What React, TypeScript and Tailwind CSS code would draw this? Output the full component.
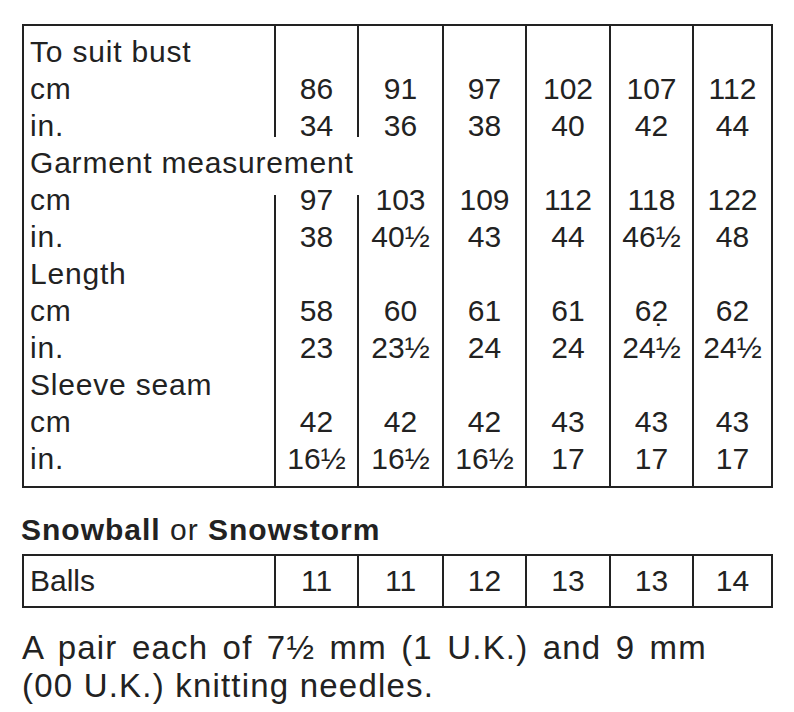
import React from "react"

type Row = {
  label: string
  vals?: string[]
}

const rows: Row[] = [
  { label: "To suit bust" },
  { label: "cm", vals: ["86", "91", "97", "102", "107", "112"] },
  { label: "in.", vals: ["34", "36", "38", "40", "42", "44"] },
  { label: "Garment measurement" },
  { label: "cm", vals: ["97", "103", "109", "112", "118", "122"] },
  { label: "in.", vals: ["38", "40½", "43", "44", "46½", "48"] },
  { label: "Length" },
  { label: "cm", vals: ["58", "60", "61", "61", "62\u0323", "62"] },
  { label: "in.", vals: ["23", "23½", "24", "24", "24½", "24½"] },
  { label: "Sleeve seam" },
  { label: "cm", vals: ["42", "42", "42", "43", "43", "43"] },
  { label: "in.", vals: ["16½", "16½", "16½", "17", "17", "17"] },
]

const balls = ["11", "11", "12", "13", "13", "14"]

// the first two column rules are broken where "Garment measurement" runs across them
function lineClass(r: number, c: number) {
  if (c > 1) return ""
  if (r === 2) return "mb-[7px]"
  if (r === 3) return "invisible"
  if (r === 4) return "mt-[14px]"
  return ""
}

function SizeTable() {
  return (
    <div className="w-[751px] border-2 border-[#222] grid grid-cols-[250px_83px_85px_83px_84px_83px_1fr]">
      {rows.map((row, r) => {
        const pad = `${r === 0 ? "pt-[7px]" : ""} ${r === rows.length - 1 ? "pb-[9px]" : ""}`
        return (
          <React.Fragment key={r}>
            <div className={`pl-[6px] leading-[37px] whitespace-nowrap tracking-[0.8px] ${pad}`}>{row.label}</div>
            {Array.from({ length: 6 }).map((_, c) => (
              <div key={c} className="flex">
                <div className={`w-[2px] shrink-0 bg-[#222] ${lineClass(r, c)}`} />
                <div className={`flex-1 text-center leading-[37px] ${pad}`}>{row.vals ? row.vals[c] : ""}</div>
              </div>
            ))}
          </React.Fragment>
        )
      })}
    </div>
  )
}

export default function App() {
  return (
    <div className="min-h-screen bg-white pt-[24px] pl-[22px] text-[#222] text-[30px] font-['Liberation_Sans',Arial,sans-serif]">
      <SizeTable />

      <h2 className="mt-[23px] -ml-[1px] text-[30px] leading-[37px] font-bold tracking-[1px]">
        Snowball <span className="font-normal">or</span> Snowstorm
      </h2>

      <div className="mt-[6px] w-[751px] h-[54px] border-2 border-[#222] grid grid-cols-[250px_83px_85px_83px_84px_83px_1fr]">
        <div className="pl-[6px] leading-[50px]">Balls</div>
        {balls.map((b, i) => (
          <div key={i} className="border-l-2 border-[#222] text-center leading-[50px]">
            {b}
          </div>
        ))}
      </div>

      <div className="mt-[21px] text-[33px] leading-[38px]">
        <div className="w-[685px] tracking-[1.2px] [text-align-last:justify]">A pair each of 7½ mm (1 U.K.) and 9 mm</div>
        <div className="tracking-[1.2px]">(00 U.K.) knitting needles.</div>
      </div>
    </div>
  )
}
